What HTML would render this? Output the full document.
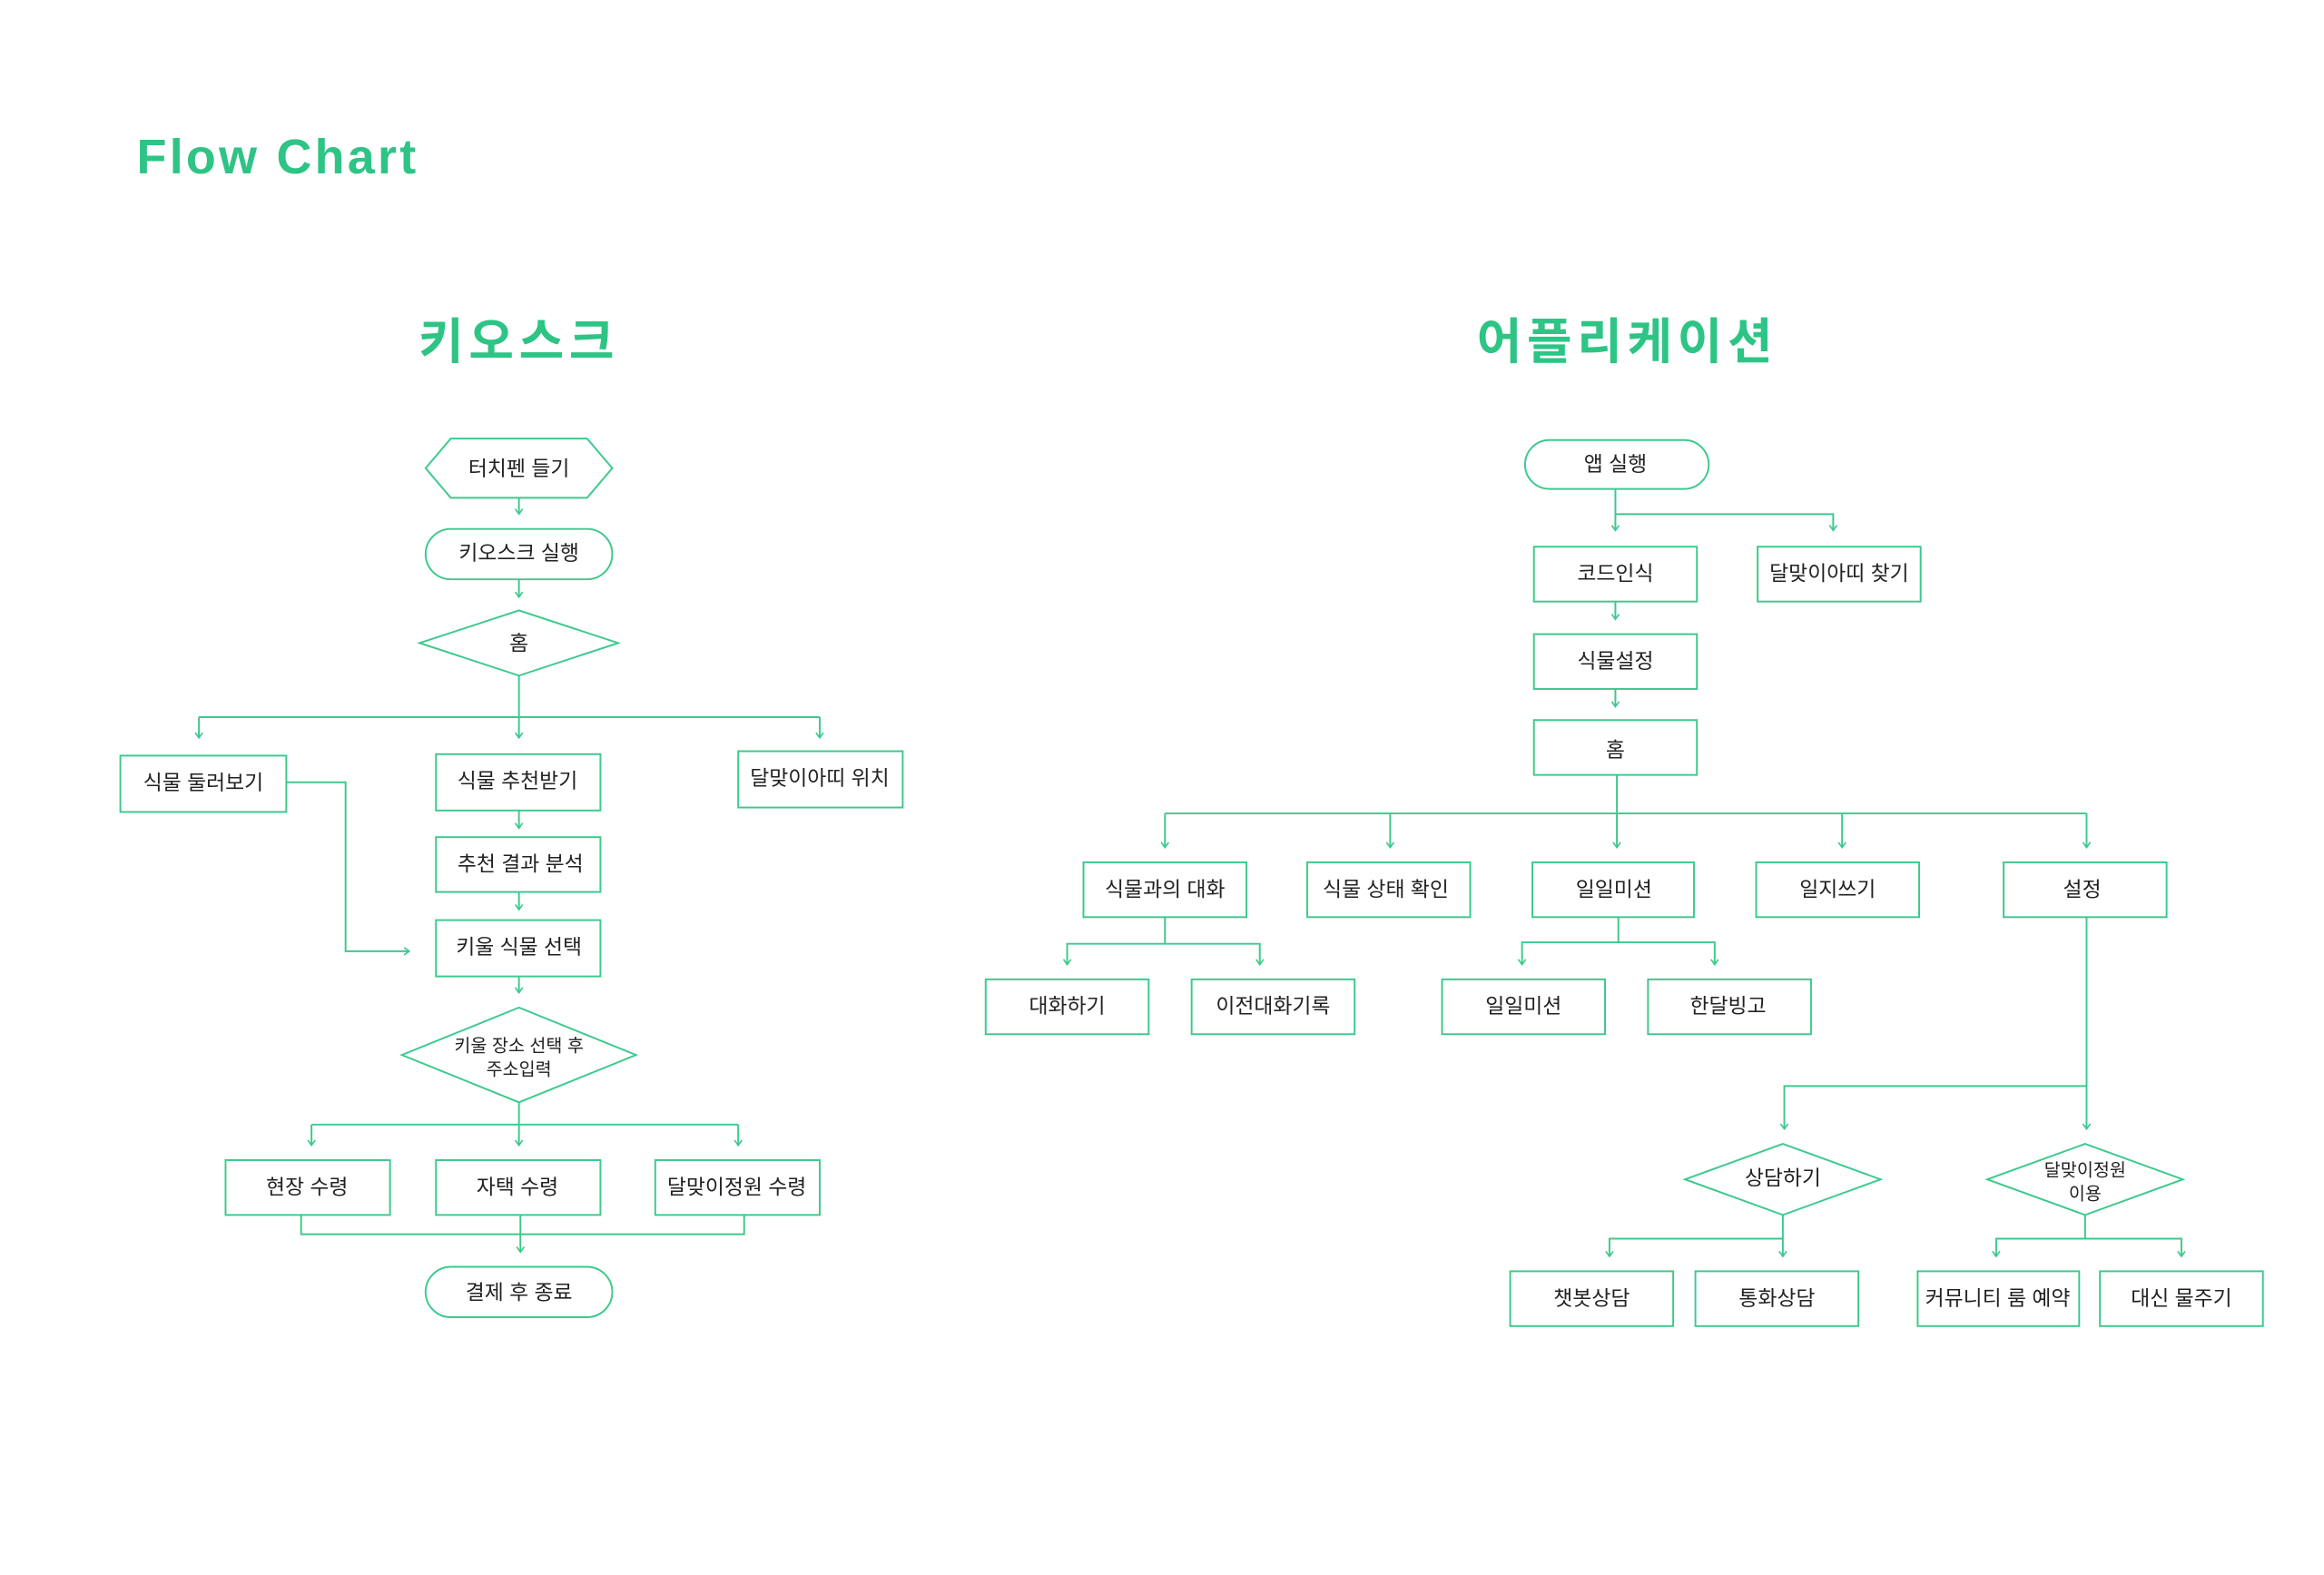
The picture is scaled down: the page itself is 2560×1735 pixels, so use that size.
<!DOCTYPE html>
<html><head><meta charset="utf-8"><style>
html,body{margin:0;padding:0;background:#fff}
svg{display:block}
text{font-family:"Liberation Sans","Noto Sans CJK KR",sans-serif}
.t{font-size:14px;fill:#222;text-anchor:middle;dominant-baseline:central}
.s{font-size:12px;fill:#222;text-anchor:middle;dominant-baseline:central}
.sh{fill:#fff;stroke:#3cc98d;stroke-width:1.2}
.ln{fill:none;stroke:#3cc98d;stroke-width:1.2}
</style></head><body>
<svg width="2560" height="1735" viewBox="0 0 1568 1063" xmlns="http://www.w3.org/2000/svg">
<defs><marker id="a" markerUnits="userSpaceOnUse" markerWidth="10" markerHeight="10" refX="5" refY="5" orient="auto"><path d="M1.5 2.5 L5 5 L1.5 7.5" fill="none" stroke="#3cc98d" stroke-width="1"/></marker></defs>
<text x="92" y="117" style="font-size:33px;font-weight:bold;fill:#2ec485;letter-spacing:2px">Flow Chart</text>
<text x="350" y="242" style="font-size:33px;font-weight:bold;fill:#2ec485;letter-spacing:3.5px;text-anchor:middle">키오스크</text>
<text x="1098" y="242" style="font-size:33px;font-weight:bold;fill:#2ec485;letter-spacing:3.5px;text-anchor:middle">어플리케이션</text>

<!-- LEFT -->
<polygon class="sh" points="287,316 304,296 396,296 413,316 396,336 304,336"/><text class="t" x="350" y="316">터치펜 들기</text>
<path class="ln" d="M350 336V347" marker-end="url(#a)"/>
<rect class="sh" x="287" y="357" width="126" height="34" rx="17"/><text class="t" x="350" y="373">키오스크 실행</text>
<path class="ln" d="M350 391V403" marker-end="url(#a)"/>
<polygon class="sh" points="283,434 350,412 417,434 350,456"/><text class="t" x="350" y="434">홈</text>
<path class="ln" d="M350 456V498" marker-end="url(#a)"/>
<path class="ln" d="M134 484H553"/>
<path class="ln" d="M134 484V498" marker-end="url(#a)"/>
<path class="ln" d="M553 484V498" marker-end="url(#a)"/>
<rect class="sh" x="81" y="510" width="112" height="38"/><text class="t" x="137" y="528">식물 둘러보기</text>
<rect class="sh" x="294" y="509" width="111" height="38"/><text class="t" x="349" y="527">식물 추천받기</text>
<rect class="sh" x="498" y="507" width="111" height="38"/><text class="t" x="553" y="525">달맞이아띠 위치</text>
<path class="ln" d="M193 528H233V642H276" marker-end="url(#a)"/>
<path class="ln" d="M350 547V559" marker-end="url(#a)"/>
<rect class="sh" x="294" y="565" width="111" height="37"/><text class="t" x="351" y="583">추천 결과 분석</text>
<path class="ln" d="M350 602V614" marker-end="url(#a)"/>
<rect class="sh" x="294" y="621" width="111" height="38"/><text class="t" x="350" y="639">키울 식물 선택</text>
<path class="ln" d="M350 659V670" marker-end="url(#a)"/>
<polygon class="sh" points="271,712 350,680 429,712 350,744"/>
<text class="s" x="350" y="706">키울 장소 선택 후</text><text class="s" x="350" y="722">주소입력</text>
<path class="ln" d="M350 744V773" marker-end="url(#a)"/>
<path class="ln" d="M210 759H498"/>
<path class="ln" d="M210 759V773" marker-end="url(#a)"/>
<path class="ln" d="M498 759V773" marker-end="url(#a)"/>
<rect class="sh" x="152" y="783" width="111" height="37"/><text class="t" x="207" y="801">현장 수령</text>
<rect class="sh" x="294" y="783" width="111" height="37"/><text class="t" x="349" y="801">자택 수령</text>
<rect class="sh" x="442" y="783" width="111" height="37"/><text class="t" x="497" y="801">달맞이정원 수령</text>
<path class="ln" d="M203 820V833H502V820M351 820V833"/>
<path class="ln" d="M351 833V845" marker-end="url(#a)"/>
<rect class="sh" x="287" y="855" width="126" height="34" rx="17"/><text class="t" x="350" y="872">결제 후 종료</text>

<!-- RIGHT -->
<rect class="sh" x="1029" y="297" width="124" height="33" rx="16.5"/><text class="t" x="1090" y="313">앱 실행</text>
<path class="ln" d="M1090 330V358" marker-end="url(#a)"/>
<path class="ln" d="M1090 347H1237V358" marker-end="url(#a)"/>
<rect class="sh" x="1035" y="369" width="110" height="37"/><text class="t" x="1090" y="387">코드인식</text>
<rect class="sh" x="1186" y="369" width="110" height="37"/><text class="t" x="1241" y="387">달맞이아띠 찾기</text>
<path class="ln" d="M1090 406V418" marker-end="url(#a)"/>
<rect class="sh" x="1035" y="428" width="110" height="37"/><text class="t" x="1090" y="446">식물설정</text>
<path class="ln" d="M1090 465V477" marker-end="url(#a)"/>
<rect class="sh" x="1035" y="486" width="110" height="37"/><text class="t" x="1090" y="506">홈</text>
<path class="ln" d="M1091 523V572" marker-end="url(#a)"/>
<path class="ln" d="M786 549H1408"/>
<path class="ln" d="M786 549V572" marker-end="url(#a)"/>
<path class="ln" d="M938 549V572" marker-end="url(#a)"/>
<path class="ln" d="M1243 549V572" marker-end="url(#a)"/>
<path class="ln" d="M1408 549V572" marker-end="url(#a)"/>
<rect class="sh" x="731" y="582" width="110" height="37"/><text class="t" x="786" y="600">식물과의 대화</text>
<rect class="sh" x="882" y="582" width="110" height="37"/><text class="t" x="935" y="600">식물 상태 확인</text>
<rect class="sh" x="1034" y="582" width="109" height="37"/><text class="t" x="1089" y="600">일일미션</text>
<rect class="sh" x="1185" y="582" width="110" height="37"/><text class="t" x="1240" y="600">일지쓰기</text>
<rect class="sh" x="1352" y="582" width="110" height="37"/><text class="t" x="1405" y="600">설정</text>
<path class="ln" d="M786 619V637H720V651" marker-end="url(#a)"/>
<path class="ln" d="M786 637H850V651" marker-end="url(#a)"/>
<rect class="sh" x="665" y="661" width="110" height="37"/><text class="t" x="720" y="679">대화하기</text>
<rect class="sh" x="804" y="661" width="110" height="37"/><text class="t" x="859" y="679">이전대화기록</text>
<path class="ln" d="M1092 619V636H1027V651" marker-end="url(#a)"/>
<path class="ln" d="M1092 636H1157V651" marker-end="url(#a)"/>
<rect class="sh" x="973" y="661" width="110" height="37"/><text class="t" x="1028" y="679">일일미션</text>
<rect class="sh" x="1112" y="661" width="110" height="37"/><text class="t" x="1166" y="679">한달빙고</text>
<path class="ln" d="M1408 619V762" marker-end="url(#a)"/>
<path class="ln" d="M1408 733H1204V762" marker-end="url(#a)"/>
<polygon class="sh" points="1137,796 1203,772 1269,796 1203,820"/><text class="t" x="1203" y="795">상담하기</text>
<polygon class="sh" points="1341,796 1407,772 1473,796 1407,820"/>
<text class="s" x="1407" y="790">달맞이정원</text><text class="s" x="1407" y="806">이용</text>
<path class="ln" d="M1203 820V848" marker-end="url(#a)"/>
<path class="ln" d="M1203 836H1086V848" marker-end="url(#a)"/>
<path class="ln" d="M1407 820V836H1347V848" marker-end="url(#a)"/>
<path class="ln" d="M1407 836H1472V848" marker-end="url(#a)"/>
<rect class="sh" x="1019" y="858" width="110" height="37"/><text class="t" x="1074" y="876">챗봇상담</text>
<rect class="sh" x="1144" y="858" width="110" height="37"/><text class="t" x="1199" y="876">통화상담</text>
<rect class="sh" x="1294" y="858" width="109" height="37"/><text class="t" x="1348" y="876">커뮤니티 룸 예약</text>
<rect class="sh" x="1417" y="858" width="110" height="37"/><text class="t" x="1472" y="876">대신 물주기</text>
</svg>
</body></html>
